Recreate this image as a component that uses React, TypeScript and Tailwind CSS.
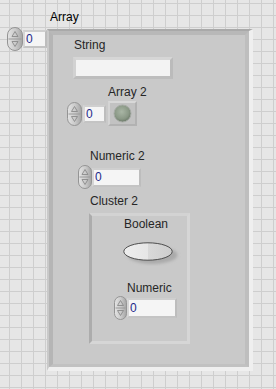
import React from 'react';

function Label({ text, className = '' }: { text: string; className?: string }) {
  return <div className={`h-[14px] leading-[14px] whitespace-nowrap text-[#262626] ${className}`}>{text}</div>;
}

function Spinner({ w = 15, id }: { w?: number; id: string }) {
  const c = w / 2;
  return (
    <svg width={w} height={24} viewBox={`0 0 ${w} 24`} className="shrink-0">
      <defs>
        <linearGradient id={id} x1="0" y1="0" x2="1" y2="0">
          <stop offset="0" stopColor="#e4e4e4" />
          <stop offset="0.55" stopColor="#c9c9c9" />
          <stop offset="1" stopColor="#a4a4a4" />
        </linearGradient>
      </defs>
      <rect x="0.5" y="0.5" width={w - 1} height="23" rx={c - 0.5} fill={`url(#${id})`} stroke="#949494" />
      <line x1="1.5" y1="12" x2={w - 1.5} y2="12" stroke="#9a9a9a" />
      <path d={`M${c} 4.5 L${c + 3} 9.5 L${c - 3} 9.5 Z`} fill="none" stroke="#8a8a8a" strokeWidth="0.9" />
      <path d={`M${c - 3} 14.5 L${c + 3} 14.5 L${c} 19.5 Z`} fill="none" stroke="#8a8a8a" strokeWidth="0.9" />
    </svg>
  );
}

function NumBox({ className = '' }: { className?: string }) {
  return (
    <div
      className={`bg-[#f5f5f5] border-[2px] border-t-[#cfcfcf] border-l-[#d6d6d6] border-r-[#bdbdbd] border-b-[#c4c4c4] text-[#1e2a8a] text-[12px] leading-[14px] pl-[1px] flex items-center ${className}`}
    >
      0
    </div>
  );
}

function Led() {
  return (
    <div className="w-[29px] h-[25px] border-[2px] border-t-[#d8d8d8] border-l-[#d4d4d4] border-r-[#b2b2b2] border-b-[#b2b2b2] bg-[#c2c2c2] flex items-center justify-center">
      <svg width="19" height="19" viewBox="0 0 19 19">
        <defs>
          <radialGradient id="ledg" cx="0.45" cy="0.4" r="0.6">
            <stop offset="0" stopColor="#a9b6a5" />
            <stop offset="0.7" stopColor="#8a9886" />
            <stop offset="1" stopColor="#6c7a69" />
          </radialGradient>
        </defs>
        <circle cx="9.5" cy="9.5" r="8.5" fill="url(#ledg)" stroke="#a7aca6" strokeWidth="1" />
      </svg>
    </div>
  );
}

function Oval() {
  return (
    <svg width="58" height="24" viewBox="0 0 58 24">
      <defs>
        <linearGradient id="ovalg" x1="0" y1="0" x2="1" y2="0">
          <stop offset="0" stopColor="#eeeeee" />
          <stop offset="0.5" stopColor="#e6e6e6" />
          <stop offset="0.5" stopColor="#d9d9d9" />
          <stop offset="1" stopColor="#cdcdcd" />
        </linearGradient>
        <filter id="ovals" x="-20%" y="-40%" width="140%" height="180%">
          <feGaussianBlur stdDeviation="1.5" />
        </filter>
      </defs>
      <ellipse cx="29.5" cy="13" rx="25" ry="9" fill="#aaaaaa" filter="url(#ovals)" />
      <ellipse cx="25" cy="9.5" rx="24.2" ry="8.7" fill="url(#ovalg)" stroke="#4c4c4c" strokeWidth="1" />
    </svg>
  );
}

export default function App() {
  return (
    <div
      className="w-[276px] h-[389px] overflow-hidden bg-[#e6e6e6] bg-[image:linear-gradient(to_right,#cecece_1px,transparent_1px),linear-gradient(to_bottom,#cecece_1px,transparent_1px)] bg-size-[12px_12px] bg-position-[9px_3px] text-[12px]"
      style={{ fontFamily: '"Liberation Sans", Arial, sans-serif' }}
    >
      <div className="pt-[10px] pl-[50px]">
        <div className="h-[14px] leading-[14px] text-black">Array</div>
      </div>
      <div className="mt-[3px] pl-[7px] flex items-start">
        <div className="flex items-center h-[24px]">
          <Spinner w={16} id="sp0" />
          <NumBox className="w-[24px] h-[18px]" />
        </div>
        {/* array frame */}
        <div className="mt-[2px] w-[206px] h-[342px] border-t-[2px] border-l-[2px] border-r-[4px] border-b-[4px] border-t-[#a9a9a9] border-l-[#c9c9c9] border-r-[#efefef] border-b-[#efefef]">
          <div className="w-full h-full border-t-[4px] border-l-[4px] border-r-[4px] border-b-[3px] border-t-[#b8b8b8] border-l-[#b5b5b5] border-r-[#bebebe] border-b-[#c1c1c1] bg-[#c9c9c9] flex flex-col items-start">
            <Label text="String" className="ml-[21px] mt-[3px]" />
            <div className="ml-[20px] mt-[5px] w-[100px] h-[22px] border-[3px] border-t-[#d6d6d6] border-l-[#d2d2d2] border-r-[#bbbbbb] border-b-[#bdbdbd] bg-[#f3f3f3]" />
            <Label text="Array 2" className="ml-[55px] mt-[6px]" />
            <div className="ml-[14px] mt-[2px] flex items-center h-[25px]">
              <Spinner w={15} id="sp1" />
              <NumBox className="w-[23px] h-[18px] ml-[1px]" />
              <div className="ml-[2px]">
                <Led />
              </div>
            </div>
            <Label text="Numeric 2" className="ml-[37px] mt-[23px]" />
            <div className="ml-[25px] mt-[2px] flex items-center h-[24px]">
              <Spinner w={14} id="sp2" />
              <NumBox className="w-[49px] h-[19px]" />
            </div>
            <Label text="Cluster 2" className="ml-[37px] mt-[5px]" />
            {/* cluster frame */}
            <div className="ml-[36px] mt-[5px] w-[101px] h-[131px] border-[3px] border-t-[#d3d3d3] border-l-[#acacac] border-r-[#d6d6d6] border-b-[#d6d6d6] bg-[#c9c9c9] flex flex-col items-start">
              <Label text="Boolean" className="ml-[32px] mt-[1px]" />
              <div className="ml-[31px] mt-[11px]">
                <Oval />
              </div>
              <Label text="Numeric" className="ml-[35px] mt-[15px]" />
              <div className="ml-[22px] mt-[1px] flex items-center h-[24px]">
                <Spinner w={13} id="sp3" />
                <NumBox className="w-[50px] h-[20px]" />
              </div>
            </div>
          </div>
        </div>
      </div>
    </div>
  );
}
